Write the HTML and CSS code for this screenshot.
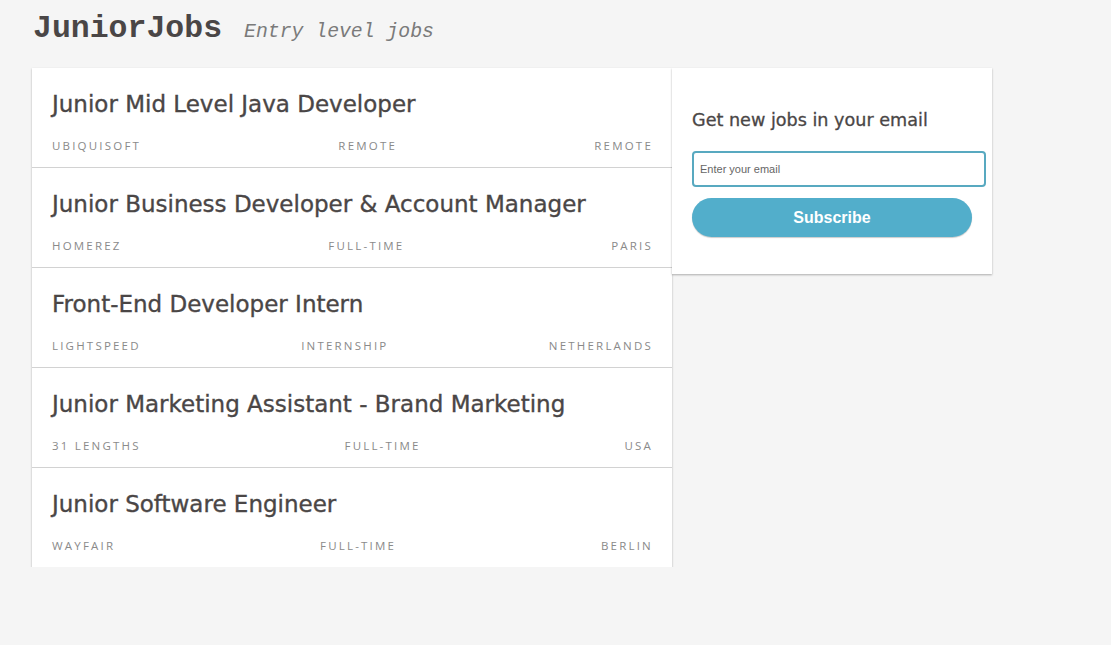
FILE: index.html
```html
<!DOCTYPE html>
<html>
<head>
<meta charset="utf-8">
<link rel="stylesheet" href="styles.css">
</head>
<body>
<header class="header">
  <h1 class="logo">JuniorJobs</h1>
  <span class="tagline">Entry level jobs</span>
</header>
<main class="layout">
  <section class="jobs">
    <article class="job">
      <h2 class="job-title">Junior Mid Level Java Developer</h2>
      <div class="job-meta"><span>Ubiquisoft</span><span>Remote</span><span>Remote</span></div>
    </article>
    <article class="job">
      <h2 class="job-title">Junior Business Developer &amp; Account Manager</h2>
      <div class="job-meta"><span>Homerez</span><span>Full-time</span><span>Paris</span></div>
    </article>
    <article class="job">
      <h2 class="job-title">Front-End Developer Intern</h2>
      <div class="job-meta"><span>Lightspeed</span><span>Internship</span><span>Netherlands</span></div>
    </article>
    <article class="job">
      <h2 class="job-title">Junior Marketing Assistant - Brand Marketing</h2>
      <div class="job-meta"><span>31 Lengths</span><span>Full-time</span><span>USA</span></div>
    </article>
    <article class="job">
      <h2 class="job-title">Junior Software Engineer</h2>
      <div class="job-meta"><span>Wayfair</span><span>Full-time</span><span>Berlin</span></div>
    </article>
  </section>
  <aside class="subscribe">
    <h3 class="subscribe-title">Get new jobs in your email</h3>
    <input class="subscribe-input" type="email" placeholder="Enter your email">
    <button class="subscribe-button">Subscribe</button>
  </aside>
</main>
</body>
</html>
```

FILE: styles.css
```css
html, body {
  margin: 0;
  padding: 0;
  background: #f5f5f5;
}
body {
  font-family: "Open Sans", "Lato", sans-serif;
  color: #4a4a4a;
}
.header {
  display: flex;
  align-items: baseline;
  padding: 11px 0 0 33px;
  height: 58px;
  box-sizing: border-box;
}
.logo {
  margin: 0;
  font-family: "Liberation Mono", monospace;
  font-weight: bold;
  font-size: 31.5px;
  color: #4a4646;
  line-height: 36px;
}
.tagline {
  margin-left: 22px;
  font-family: "Liberation Mono", monospace;
  font-style: italic;
  font-size: 19.8px;
  color: #7a7a7a;
}
.layout {
  display: flex;
  align-items: flex-start;
  padding: 10px 0 0 32px;
}
.jobs {
  width: 640px;
  background: #fff;
  box-shadow: 0 1px 2px rgba(0,0,0,0.3);
}
.job {
  height: 100px;
  box-sizing: border-box;
  padding: 21px 20px 0;
  border-bottom: 1px solid #d2d2d2;
}
.job:last-child {
  border-bottom: none;
  height: 99px;
}
.job-title {
  margin: 0;
  font-family: "DejaVu Sans", sans-serif;
  font-size: 23px;
  font-weight: normal;
  -webkit-text-stroke: 0.35px currentColor;
  line-height: 30px;
  color: #4a4646;
}
.job-meta {
  display: flex;
  justify-content: space-between;
  margin-top: 20px;
  font-size: 11.5px;
  letter-spacing: 2.2px;
  text-transform: uppercase;
  color: #8a8a8a;
  line-height: 14px;
}
.job-meta span:last-child {
  margin-right: -1px;
}
.subscribe {
  width: 320px;
  box-sizing: border-box;
  background: #fff;
  padding: 40px 6px 37px 20px;
  box-shadow: 0 1px 2px rgba(0,0,0,0.3);
}
.subscribe-title {
  margin: 0 0 19px;
  font-family: "DejaVu Sans", sans-serif;
  font-size: 17.6px;
  font-weight: normal;
  -webkit-text-stroke: 0.3px currentColor;
  line-height: 24px;
  color: #4a4646;
}
.subscribe-input {
  display: block;
  width: 294px;
  height: 36px;
  box-sizing: border-box;
  border: 2px solid #58a9c0;
  border-radius: 4px;
  padding: 0 6px;
  font-family: "Liberation Sans", sans-serif;
  font-size: 11px;
  color: #555;
  outline: none;
}
.subscribe-input::placeholder {
  color: #666;
}
.subscribe-button {
  display: block;
  margin-top: 11px;
  width: 280px;
  height: 39px;
  border: none;
  border-radius: 20px;
  background: #52aecb;
  box-shadow: 0 1px 1px rgba(0,0,0,0.2);
  color: #fff;
  font-family: "Liberation Sans", sans-serif;
  font-weight: bold;
  font-size: 16px;
}
```
